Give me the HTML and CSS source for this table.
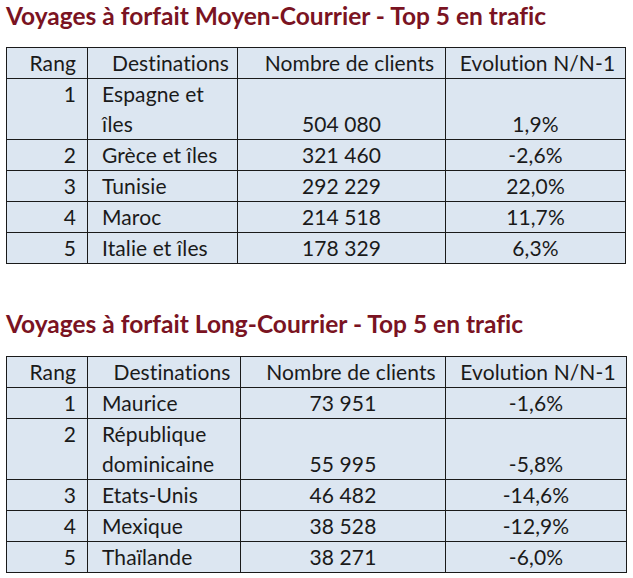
FILE: index.html
```html
<!DOCTYPE html>
<html lang="fr">
<head>
<meta charset="utf-8">
<link rel="stylesheet" href="styles.css">
</head>
<body>
<div class="page">
  <h2 class="title">Voyages à forfait Moyen-Courrier - Top 5 en trafic</h2>
  <table class="grid grid-mc">
    <colgroup><col class="c1"><col class="c2"><col class="c3"><col class="c4"></colgroup>
    <tr class="head"><th class="rang">Rang</th><th class="h-dest">Destinations</th><th class="h-num">Nombre de clients</th><th class="h-evo">Evolution N/N-1</th></tr>
    <tr class="double"><td class="rang">1</td><td class="dest">Espagne et<br>îles</td><td class="num">504 080</td><td class="num">1,9%</td></tr>
    <tr><td class="rang">2</td><td class="dest">Grèce et îles</td><td class="num">321 460</td><td class="num">-2,6%</td></tr>
    <tr><td class="rang">3</td><td class="dest">Tunisie</td><td class="num">292 229</td><td class="num">22,0%</td></tr>
    <tr><td class="rang">4</td><td class="dest">Maroc</td><td class="num">214 518</td><td class="num">11,7%</td></tr>
    <tr><td class="rang">5</td><td class="dest">Italie et îles</td><td class="num">178 329</td><td class="num">6,3%</td></tr>
  </table>
  <h2 class="title title-second">Voyages à forfait Long-Courrier - Top 5 en trafic</h2>
  <table class="grid grid-lc">
    <colgroup><col class="c1"><col class="c2"><col class="c3"><col class="c4"></colgroup>
    <tr class="head"><th class="rang">Rang</th><th class="h-dest">Destinations</th><th class="h-num">Nombre de clients</th><th class="h-evo">Evolution N/N-1</th></tr>
    <tr><td class="rang">1</td><td class="dest">Maurice</td><td class="num">73 951</td><td class="num">-1,6%</td></tr>
    <tr class="double"><td class="rang">2</td><td class="dest">République<br>dominicaine</td><td class="num">55 995</td><td class="num">-5,8%</td></tr>
    <tr><td class="rang">3</td><td class="dest">Etats-Unis</td><td class="num">46 482</td><td class="num">-14,6%</td></tr>
    <tr><td class="rang">4</td><td class="dest">Mexique</td><td class="num">38 528</td><td class="num">-12,9%</td></tr>
    <tr><td class="rang">5</td><td class="dest">Thaïlande</td><td class="num">38 271</td><td class="num">-6,0%</td></tr>
  </table>
</div>
</body>
</html>
```

FILE: styles.css
```css
html, body {
  margin: 0;
  padding: 0;
  background: #ffffff;
}
.page {
  padding: 0 0 0 6px;
  font-family: Lato, "Open Sans", sans-serif;
  font-variant-ligatures: none;
  color: #1a1a1a;
}
.title {
  margin: 0;
  height: 47px;
  line-height: 32px;
  font-size: 24.5px;
  font-weight: bold;
  color: #7a1322;
}
.title-second {
  margin-top: 47px;
  height: 45px;
  line-height: 26px;
}
.grid {
  border-collapse: collapse;
  table-layout: fixed;
  background: #dce6f1;
  font-size: 21px;
  letter-spacing: 0.1px;
}
.grid-mc { width: 619px; }
.grid-lc { width: 620px; }
.grid-mc .c1 { width: 81px; }
.grid-mc .c2 { width: 150px; }
.grid-mc .c3 { width: 208px; }
.grid-mc .c4 { width: 180px; }
.grid-lc .c1 { width: 81px; }
.grid-lc .c2 { width: 153px; }
.grid-lc .c3 { width: 205px; }
.grid-lc .c4 { width: 181px; }
.grid th, .grid td {
  border: 1px solid #1a1a1a;
  padding: 0;
  line-height: 30px;
  height: 30px;
  font-weight: normal;
  text-align: center;
  white-space: nowrap;
}
.grid .head th { height: 29px; }
.grid .h-dest, .grid .h-num { padding-left: 16px; }
.grid .h-evo { padding-left: 4px; }
.grid .rang {
  text-align: right;
  padding-right: 11px;
  vertical-align: top;
}
.grid .dest {
  text-align: left;
  padding-left: 14px;
  vertical-align: top;
}
.grid .num {
  vertical-align: bottom;
}
.grid .double td { height: 60px; }
```
